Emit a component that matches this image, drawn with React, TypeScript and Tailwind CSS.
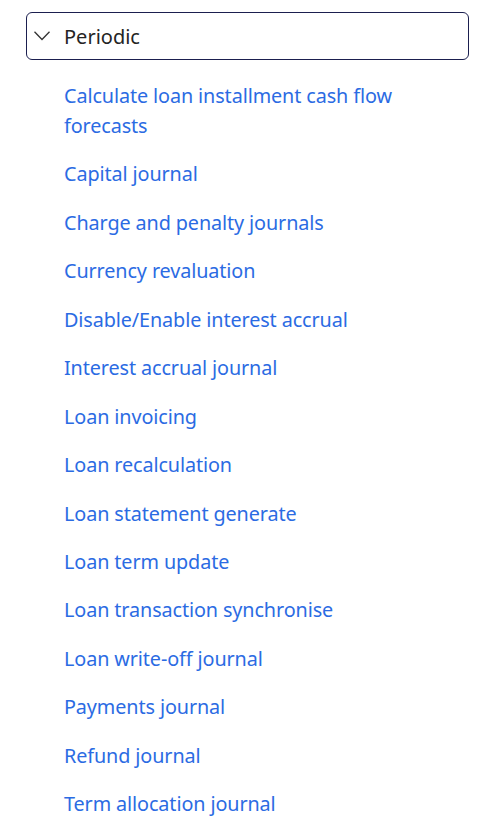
import React from "react";

const items = [
  "Calculate loan installment cash flow forecasts",
  "Capital journal",
  "Charge and penalty journals",
  "Currency revaluation",
  "Disable/Enable interest accrual",
  "Interest accrual journal",
  "Loan invoicing",
  "Loan recalculation",
  "Loan statement generate",
  "Loan term update",
  "Loan transaction synchronise",
  "Loan write-off journal",
  "Payments journal",
  "Refund journal",
  "Term allocation journal",
];

export default function App() {
  return (
    <div
      className="w-[477px] h-[823px] bg-white overflow-hidden pt-[12px] pl-[26px] pr-[8px]"
      style={{ fontFamily: '"Noto Sans", "Open Sans", sans-serif' }}
    >
      <div className="w-[443px] h-[48px] border border-[#1b1f4f] rounded-[6px] flex items-center pl-[7px]">
        <svg width="16" height="10" viewBox="0 0 16 10" className="mt-[0px]">
          <path d="M0.5 0.8 L8 8.5 L15.5 0.8" fill="none" stroke="#333" strokeWidth="1.3" />
        </svg>
        <span className="ml-[14px] text-[20px] text-[#242424] leading-none mt-[2px]">Periodic</span>
      </div>
      <ul className="mt-[20.5px] pl-[38px] pr-[30px] flex flex-col gap-[18px]">
        {items.map((t) => (
          <li key={t} className="text-[19.8px] leading-[30.46px] text-[#2b6be3] tracking-[-0.1px]">
            {t}
          </li>
        ))}
      </ul>
    </div>
  );
}
